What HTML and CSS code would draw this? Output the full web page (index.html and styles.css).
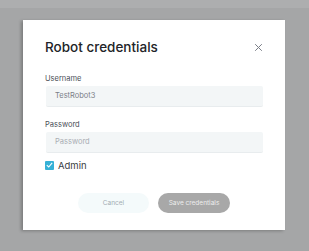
FILE: index.html
```html
<!DOCTYPE html>
<html lang="en">
<head>
  <meta charset="UTF-8">
  <meta name="viewport" content="width=device-width, initial-scale=1">
  <title>Robot credentials</title>
  <link rel="stylesheet" href="styles.css">
</head>
<body>
  <div class="topbar"></div>
  <div class="overlay">
    <div class="dialog">
      <div class="dialog-head">
        <h2>Robot credentials</h2>
        <button class="close" aria-label="Close">
          <svg width="9" height="9" viewBox="0 0 9 9">
            <path d="M1.2 1.2L7.8 7.8M7.8 1.2L1.2 7.8" stroke="#7a7e87" stroke-width="1" fill="none"/>
          </svg>
        </button>
      </div>

      <label class="field-label">Username</label>
      <div class="input">TestRobot3</div>

      <label class="field-label">Password</label>
      <div class="input placeholder">Password</div>

      <div class="check-row">
        <span class="checkbox">
          <svg width="7" height="6" viewBox="0 0 7 6">
            <path d="M0.8 3.2L2.7 5L6.2 0.9" stroke="#ffffff" stroke-width="1.1" fill="none"/>
          </svg>
        </span>
        <span>Admin</span>
      </div>

      <div class="actions">
        <button class="btn btn-cancel">Cancel</button>
        <button class="btn btn-save">Save credentials</button>
      </div>
    </div>
  </div>
</body>
</html>
```

FILE: styles.css
```css
body {
  margin: 0;
  padding: 0;
  font-family: Inter, 'Noto Sans', sans-serif;
  background: #a5a6a7;
  color: #2a2c30;
  height: 251px;
  overflow: hidden;
}
.topbar {
  height: 8px;
  background: #adaeaf;
}
.overlay {
  padding: 12px 0 0 23px;
}
.dialog {
  width: 262px;
  height: 210px;
  box-sizing: border-box;
  background: #ffffff;
  padding: 17px 22px 0 22px;
  box-shadow: -2px 1px 3px rgba(0, 0, 0, 0.25);
}
.dialog-head {
  display: flex;
  justify-content: space-between;
  align-items: center;
  margin-bottom: 17px;
}
h2 {
  margin: 0;
  font-size: 13.5px;
  font-weight: 500;
  line-height: 20px;
  color: #222428;
}
.close {
  border: none;
  background: none;
  padding: 0;
  display: flex;
  cursor: pointer;
}
.field-label {
  display: block;
  font-size: 7.5px;
  line-height: 10px;
  color: #4a4e57;
  margin-bottom: 2px;
}
.input {
  margin-left: 1px;
  width: 217px;
  height: 21px;
  box-sizing: border-box;
  background: #f3f6f7;
  border-bottom: 1px solid #e8ecee;
  border-radius: 2px;
  font-size: 7.5px;
  line-height: 20px;
  padding-left: 9px;
  color: #7c8088;
  margin-bottom: 13px;
}
.input.placeholder {
  color: #a9adb3;
  margin-bottom: 6px;
}
.check-row {
  display: flex;
  align-items: center;
  gap: 4px;
  font-size: 9.5px;
  color: #3a3d42;
  height: 12px;
}
.checkbox {
  width: 9px;
  height: 9px;
  background: #36b1d6;
  border-radius: 1px;
  display: flex;
  align-items: center;
  justify-content: center;
}
.actions {
  display: flex;
  justify-content: center;
  gap: 9px;
  margin-top: 22px;
}
.btn {
  font-family: inherit;
  border: none;
  border-radius: 10px;
  height: 20px;
  font-size: 6.5px;
  padding: 0;
}
.btn-cancel {
  width: 71px;
  background: #f4fafb;
  color: #a3acb2;
}
.btn-save {
  width: 72px;
  background: #a8a8a8;
  color: #eeeeee;
}
```
